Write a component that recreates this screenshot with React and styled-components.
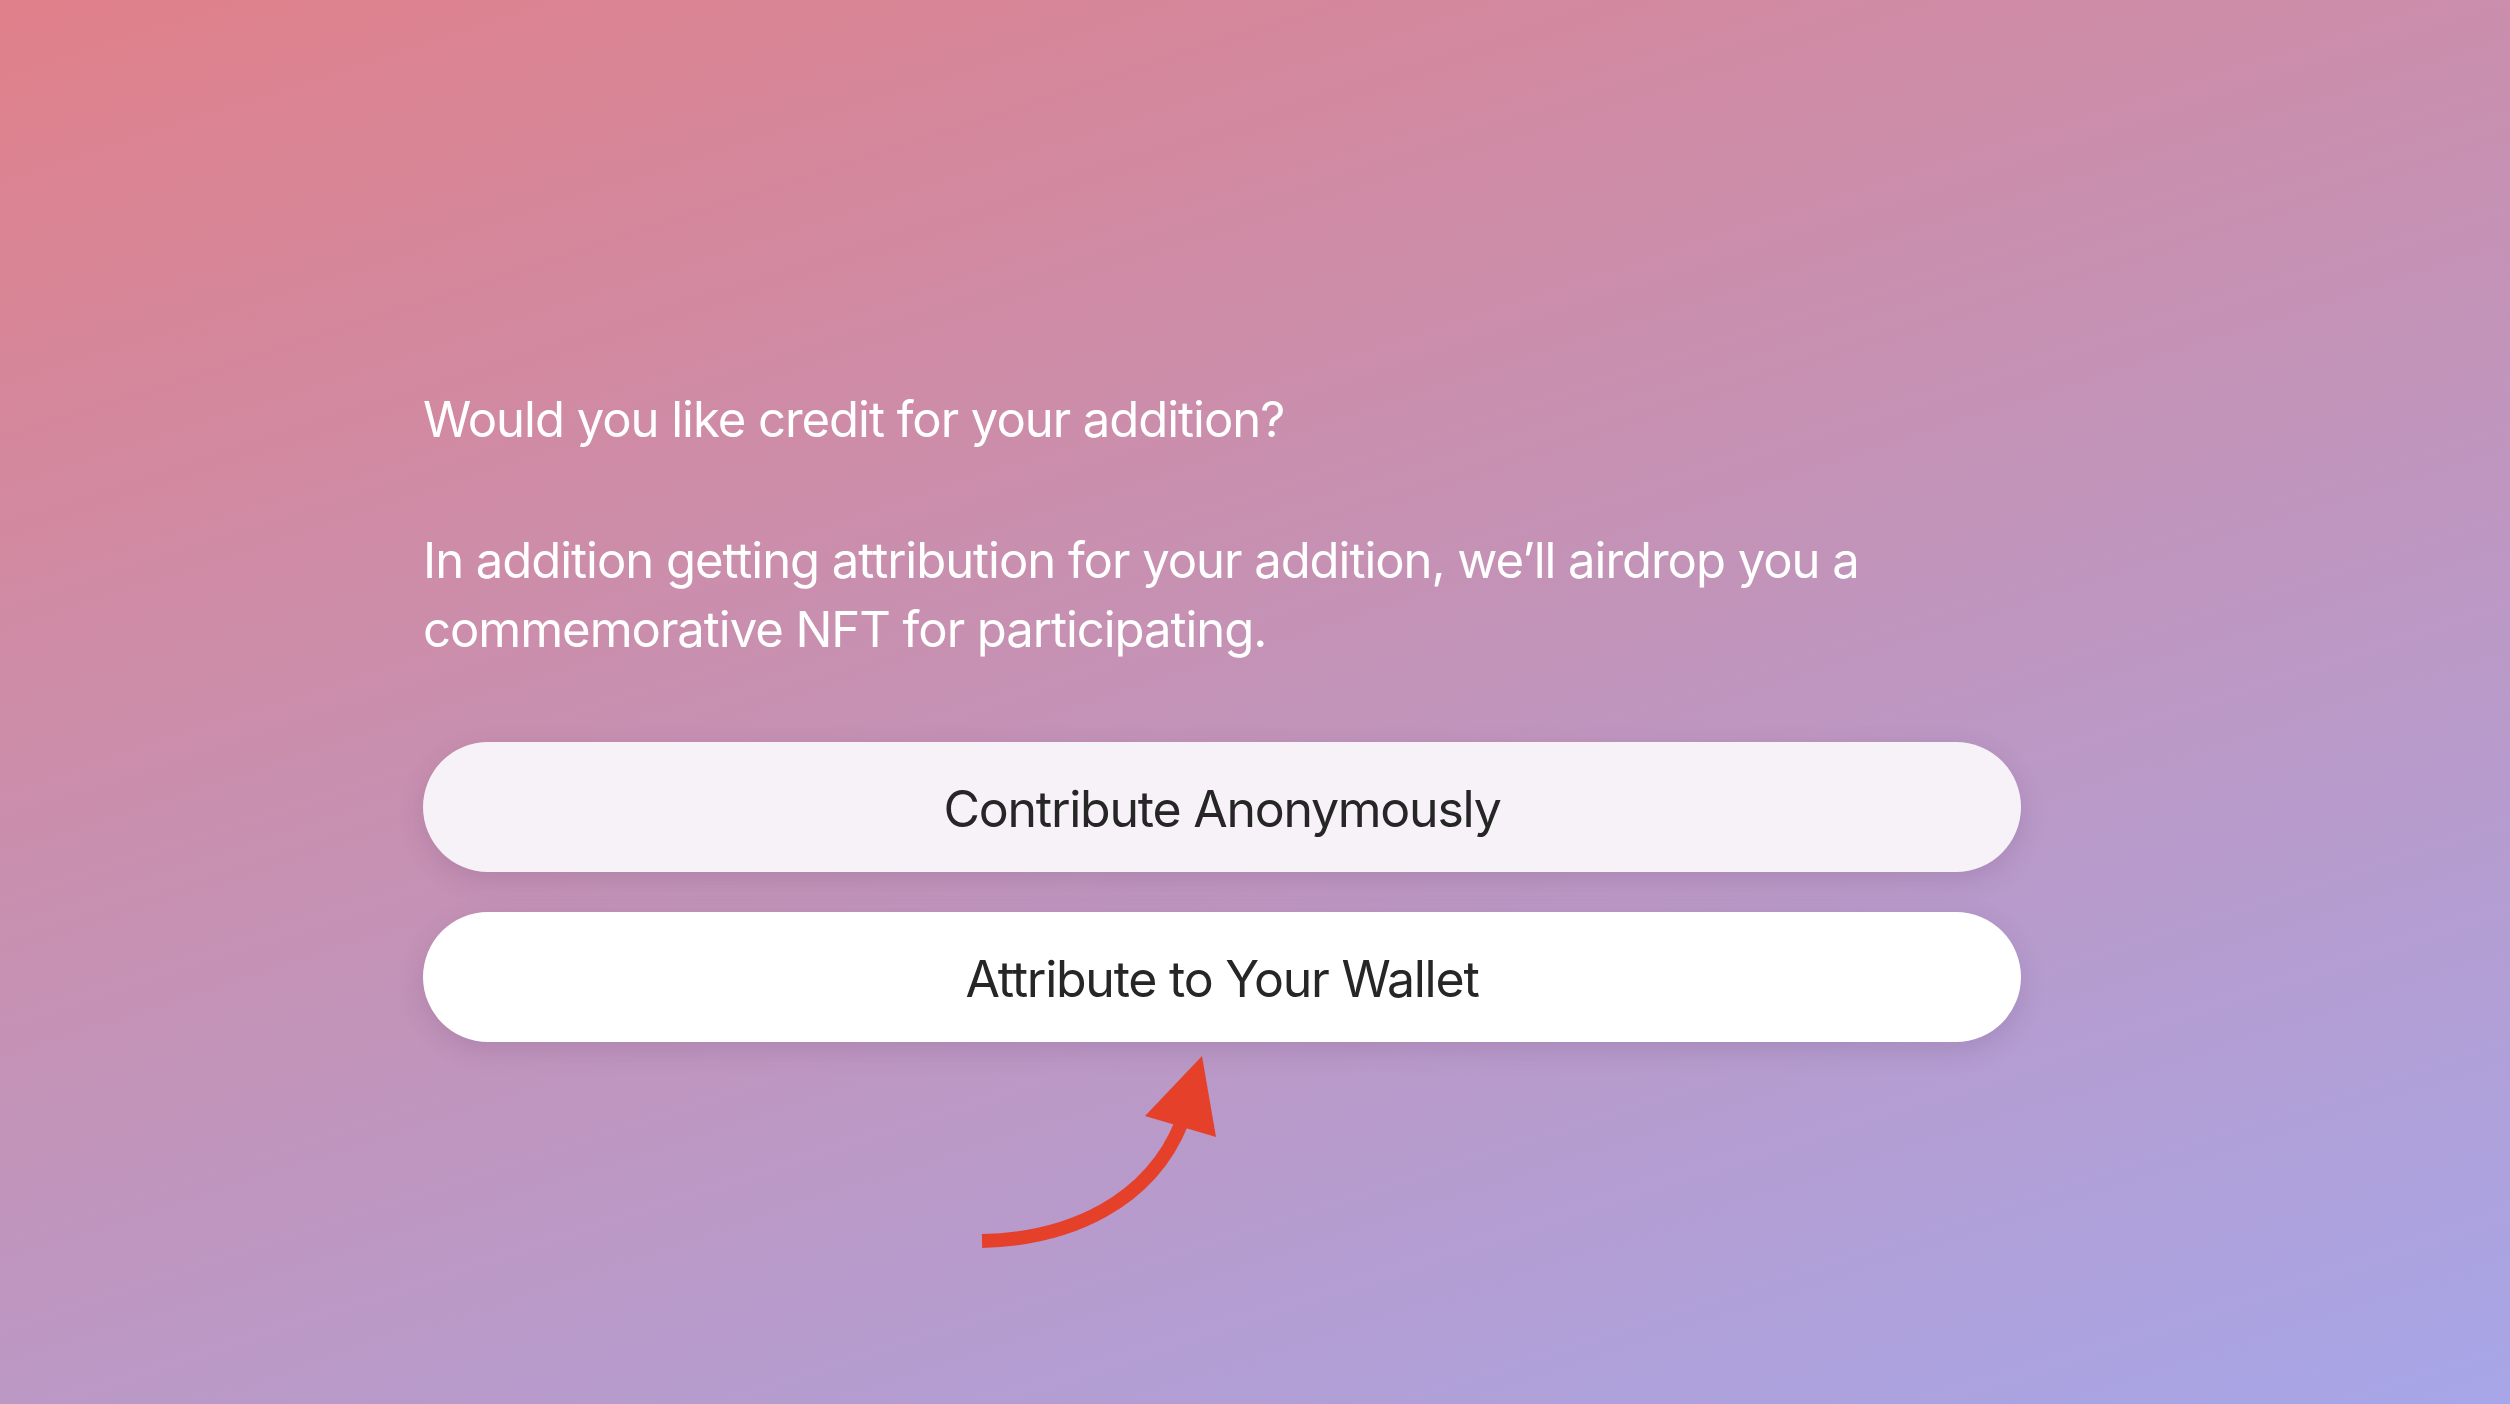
import styled, { createGlobalStyle } from "styled-components";

const GlobalStyle = createGlobalStyle`
  html, body {
    margin: 0;
    padding: 0;
  }
  body {
    font-family: Inter, "Noto Sans", "Liberation Sans", sans-serif;
  }
`;

const Page = styled.div`
  min-height: 100vh;
  box-sizing: border-box;
  padding: 385px 0 0 423px;
  background: linear-gradient(162deg, #e0808a 0%, #c393b8 50%, #a7a6e8 100%);
`;

const Content = styled.div`
  width: 1598px;
  display: flex;
  flex-direction: column;
`;

const Text = styled.p`
  margin: 0 0 ${(p) => p.$gap || 0}px;
  font-size: 49px;
  line-height: 69px;
  letter-spacing: -0.021em;
  color: #ffffff;
  font-weight: 400;
`;

const Buttons = styled.div`
  margin-top: 78px;
  display: flex;
  flex-direction: column;
  gap: 40px;
`;

const Choice = styled.button`
  height: 130px;
  width: 100%;
  padding: 4px 0 0;
  border: none;
  border-radius: 65px;
  background: ${(p) => (p.$primary ? "#ffffff" : "#f7f2f7")};
  box-shadow: 0 8px 26px rgba(90, 50, 100, 0.16);
  font-family: inherit;
  font-size: 50px;
  letter-spacing: -0.025em;
  color: #262626;
  cursor: pointer;
`;

const Pointer = styled.svg`
  display: block;
  margin: 8px 0 0 547px;
`;

const CurvedArrow = () => (
  <Pointer width="260" height="210" viewBox="0 0 260 210">
    <path
      d="M12 191 C100 189, 180 152, 212 72"
      fill="none"
      stroke="#e5412a"
      strokeWidth="14"
    />
    <polygon points="175,66 232,6 246,87" fill="#e5412a" />
  </Pointer>
);

export default function App() {
  return (
    <>
      <GlobalStyle />
      <Page>
        <Content>
          <Text $gap={72}>Would you like credit for your addition?</Text>
          <Text>
            In addition getting attribution for your addition, we’ll airdrop you a
            commemorative NFT for participating.
          </Text>
          <Buttons>
            <Choice>Contribute Anonymously</Choice>
            <Choice $primary>Attribute to Your Wallet</Choice>
          </Buttons>
          <CurvedArrow />
        </Content>
      </Page>
    </>
  );
}
